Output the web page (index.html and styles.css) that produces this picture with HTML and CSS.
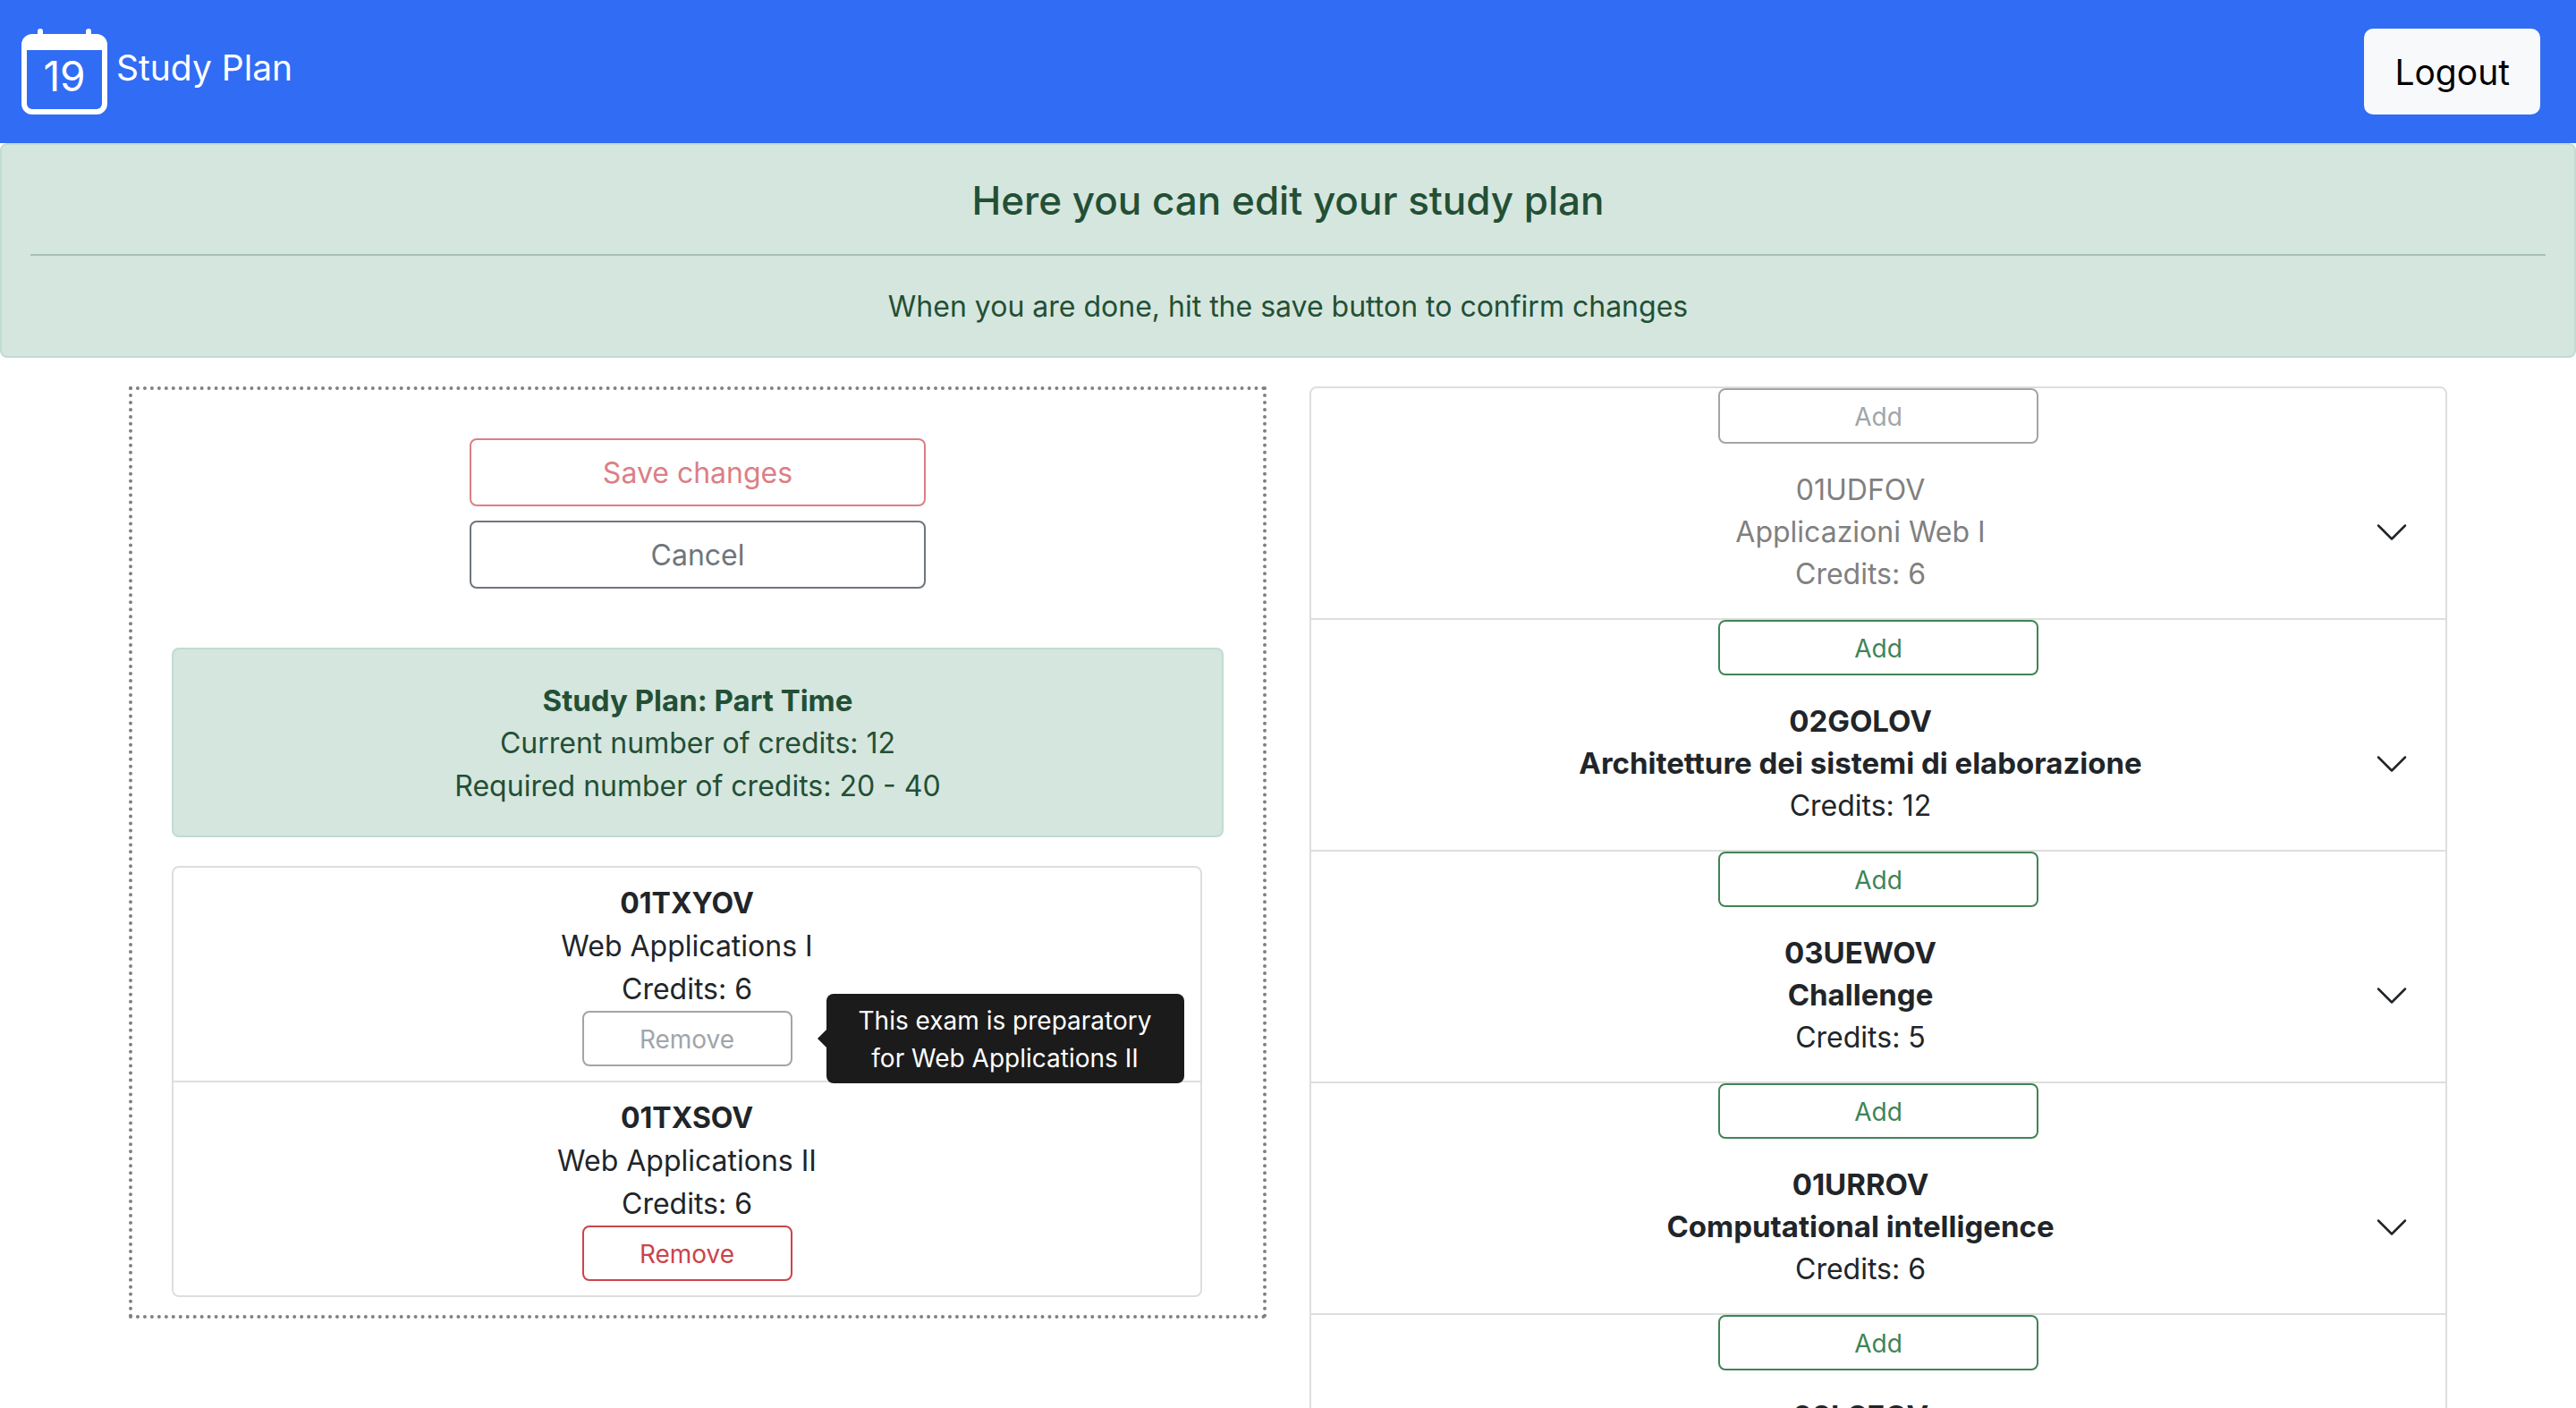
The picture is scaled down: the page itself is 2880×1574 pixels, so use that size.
FILE: index.html
```html
<!DOCTYPE html>
<html lang="en">
<head>
<meta charset="utf-8">
<title>Study Plan</title>
<link rel="stylesheet" href="styles.css">
</head>
<body>
<header class="navbar">
  <a class="brand" href="#">
    <svg class="brand-icon" viewBox="0 0 96 96" aria-hidden="true">
      <path fill="#fff" fill-rule="evenodd" d="M18 6V3a3 3 0 0 1 6 0v3h48V3a3 3 0 0 1 6 0v3h6a12 12 0 0 1 12 12v66a12 12 0 0 1-12 12H12A12 12 0 0 1 0 84V18A12 12 0 0 1 12 6zM6 24v60a6 6 0 0 0 6 6h72a6 6 0 0 0 6-6V24z"/>
      <text class="brand-day" x="48" y="70" text-anchor="middle">19</text>
    </svg>
    <span>Study Plan</span>
  </a>
  <button class="btn btn-light" type="button">Logout</button>
</header>

<section class="alert intro">
  <h1 class="intro-title">Here you can edit your study plan</h1>
  <hr class="intro-rule">
  <p>When you are done, hit the save button to confirm changes</p>
</section>

<main class="columns">
  <section class="plan">
    <div class="plan-actions">
      <button class="btn btn-save" type="button" disabled>Save changes</button>
      <button class="btn btn-cancel" type="button">Cancel</button>
    </div>
    <div class="alert summary">
      <h2 class="summary-title">Study Plan: Part Time</h2>
      <p>Current number of credits: 12</p>
      <p>Required number of credits: 20 - 40</p>
    </div>
    <ul class="plan-list">
      <li class="plan-item">
        <strong>01TXYOV</strong>
        <span>Web Applications I</span>
        <span>Credits: 6</span>
        <div class="remove">
          <button class="btn btn-small btn-muted" type="button" disabled aria-describedby="prep-tip">Remove</button>
          <div class="tooltip" role="tooltip" id="prep-tip">This exam is preparatory for Web Applications II</div>
        </div>
      </li>
      <li class="plan-item">
        <strong>01TXSOV</strong>
        <span>Web Applications II</span>
        <span>Credits: 6</span>
        <div class="remove">
          <button class="btn btn-small btn-danger" type="button">Remove</button>
        </div>
      </li>
    </ul>
  </section>

  <ul class="exams">
    <li class="exam exam-taken">
      <button class="btn btn-small btn-muted add" type="button" disabled>Add</button>
      <button class="exam-toggle" type="button" aria-expanded="false">
        <span class="exam-text"><span>01UDFOV</span><span>Applicazioni Web I</span><span>Credits: 6</span></span>
        <svg class="chevron" viewBox="0 0 16 16" aria-hidden="true"><path d="M2 5l6 6 6-6"/></svg>
      </button>
    </li>
    <li class="exam">
      <button class="btn btn-small btn-success add" type="button">Add</button>
      <button class="exam-toggle" type="button" aria-expanded="false">
        <span class="exam-text"><strong>02GOLOV</strong><strong>Architetture dei sistemi di elaborazione</strong><span>Credits: 12</span></span>
        <svg class="chevron" viewBox="0 0 16 16" aria-hidden="true"><path d="M2 5l6 6 6-6"/></svg>
      </button>
    </li>
    <li class="exam">
      <button class="btn btn-small btn-success add" type="button">Add</button>
      <button class="exam-toggle" type="button" aria-expanded="false">
        <span class="exam-text"><strong>03UEWOV</strong><strong>Challenge</strong><span>Credits: 5</span></span>
        <svg class="chevron" viewBox="0 0 16 16" aria-hidden="true"><path d="M2 5l6 6 6-6"/></svg>
      </button>
    </li>
    <li class="exam">
      <button class="btn btn-small btn-success add" type="button">Add</button>
      <button class="exam-toggle" type="button" aria-expanded="false">
        <span class="exam-text"><strong>01URROV</strong><strong>Computational intelligence</strong><span>Credits: 6</span></span>
        <svg class="chevron" viewBox="0 0 16 16" aria-hidden="true"><path d="M2 5l6 6 6-6"/></svg>
      </button>
    </li>
    <li class="exam">
      <button class="btn btn-small btn-success add" type="button">Add</button>
      <button class="exam-toggle" type="button" aria-expanded="false">
        <span class="exam-text"><strong>02LSEOV</strong><strong>Computer architectures</strong><span>Credits: 10</span></span>
        <svg class="chevron" viewBox="0 0 16 16" aria-hidden="true"><path d="M2 5l6 6 6-6"/></svg>
      </button>
    </li>
  </ul>
</main>
</body>
</html>
```
FILE: styles.css
```css
* {
  box-sizing: border-box;
}

html {
  scrollbar-width: none;
}

body {
  margin: 0;
  background: #fff;
  color: #212529;
  font-family: Inter, "Liberation Sans", sans-serif;
  font-size: 32px;
  line-height: 48px;
}

p,
h1,
h2,
ul {
  margin: 0;
  padding: 0;
}

ul {
  list-style: none;
}

/* Buttons */
.btn {
  padding: 13px 24px 11px;
  border: 2px solid currentColor;
  border-radius: 8px;
  background: transparent;
  font-family: inherit;
  font-size: 32px;
  line-height: 48px;
  text-align: center;
}

.btn-light {
  padding: 17px 32px 15px;
  border-color: #f8f9fb;
  border-radius: 10px;
  background: #f8f9fb;
  color: #000;
  font-size: 39px;
  line-height: 60px;
}

.btn-small {
  padding: 9px 16px 7px;
  font-size: 28px;
  line-height: 42px;
}

.btn-save {
  color: #db7f86;
}

.btn-cancel {
  color: #6e757c;
}

.btn-muted {
  color: #a0a5aa;
}

.btn-danger {
  color: #cb444a;
}

.btn-success {
  color: #3f8457;
}

/* Top bar */
.navbar {
  display: flex;
  align-items: center;
  justify-content: space-between;
  padding: 32px 40px 32px 24px;
  background: #316cf4;
}

.brand {
  display: flex;
  gap: 10px;
  color: #fff;
  font-size: 39px;
  line-height: 60px;
  text-decoration: none;
}

.brand span {
  padding-top: 14px;
}

.brand-icon {
  width: 96px;
  height: 96px;
}

.brand-day {
  fill: #fff;
  font-size: 46px;
}

/* Green notices */
.alert {
  padding: 33px 32px 31px;
  border: 2px solid #c2dbd0;
  border-radius: 8px;
  background: #d5e6de;
  color: #234f35;
  text-align: center;
}

.intro {
  margin-bottom: 32px;
}

.intro-title {
  font-size: 44px;
  font-weight: 500;
  line-height: 58px;
}

.intro-rule {
  height: 2px;
  margin: 31px 0 33px;
  border: 0;
  background: #a8c0b7;
}

/* Two columns */
.columns {
  display: grid;
  grid-template-columns: 1fr 1fr;
  align-items: start;
  gap: 48px;
  padding: 0 5%;
}

.plan {
  padding: 54px 44px 20px;
  border: 4px dotted #808080;
}

.plan-actions {
  display: grid;
  gap: 16px;
  width: 510px;
  margin: 0 auto 66px;
}

.summary {
  margin-bottom: 32px;
}

.summary-title {
  font-size: 33px;
  font-weight: 700;
  line-height: 48px;
}

.plan-list,
.exams {
  border: 2px solid #dedede;
  border-radius: 8px;
}

.plan-list {
  margin-right: 24px;
}

.plan-item {
  display: flex;
  flex-direction: column;
  align-items: center;
  padding: 16px 32px;
}

.plan-item + .plan-item,
.exam + .exam {
  border-top: 2px solid #dedede;
}

.remove {
  position: relative;
  display: grid;
  width: 235px;
}

.tooltip {
  position: absolute;
  top: 50%;
  left: calc(100% + 38px);
  z-index: 1;
  width: 400px;
  padding: 9px 24px 7px;
  transform: translateY(-50%);
  border-radius: 8px;
  background: #1b1b1b;
  color: #fff;
  font-size: 28px;
  line-height: 42px;
  text-align: center;
}

.tooltip::before {
  content: "";
  position: absolute;
  top: calc(50% - 10px);
  right: 100%;
  border: 10px solid transparent;
  border-right-color: #1b1b1b;
  border-left-width: 0;
}

/* Exam list */
.exam {
  display: flex;
  flex-direction: column;
}

.add {
  align-self: center;
  width: 358px;
}

.exam-toggle {
  display: flex;
  align-items: center;
  padding: 28px 40px 26px;
  border: 0;
  background: transparent;
  color: #212529;
  font-family: inherit;
  font-size: 32px;
  line-height: 47px;
}

.exam-text {
  display: flex;
  flex: 1;
  flex-direction: column;
  text-align: center;
}

.exam-text strong {
  font-size: 33px;
}

.exam-taken .exam-text {
  color: #808080;
}

.chevron {
  width: 40px;
  height: 40px;
  fill: none;
  stroke: #212529;
  stroke-linecap: round;
  stroke-linejoin: round;
}
```
